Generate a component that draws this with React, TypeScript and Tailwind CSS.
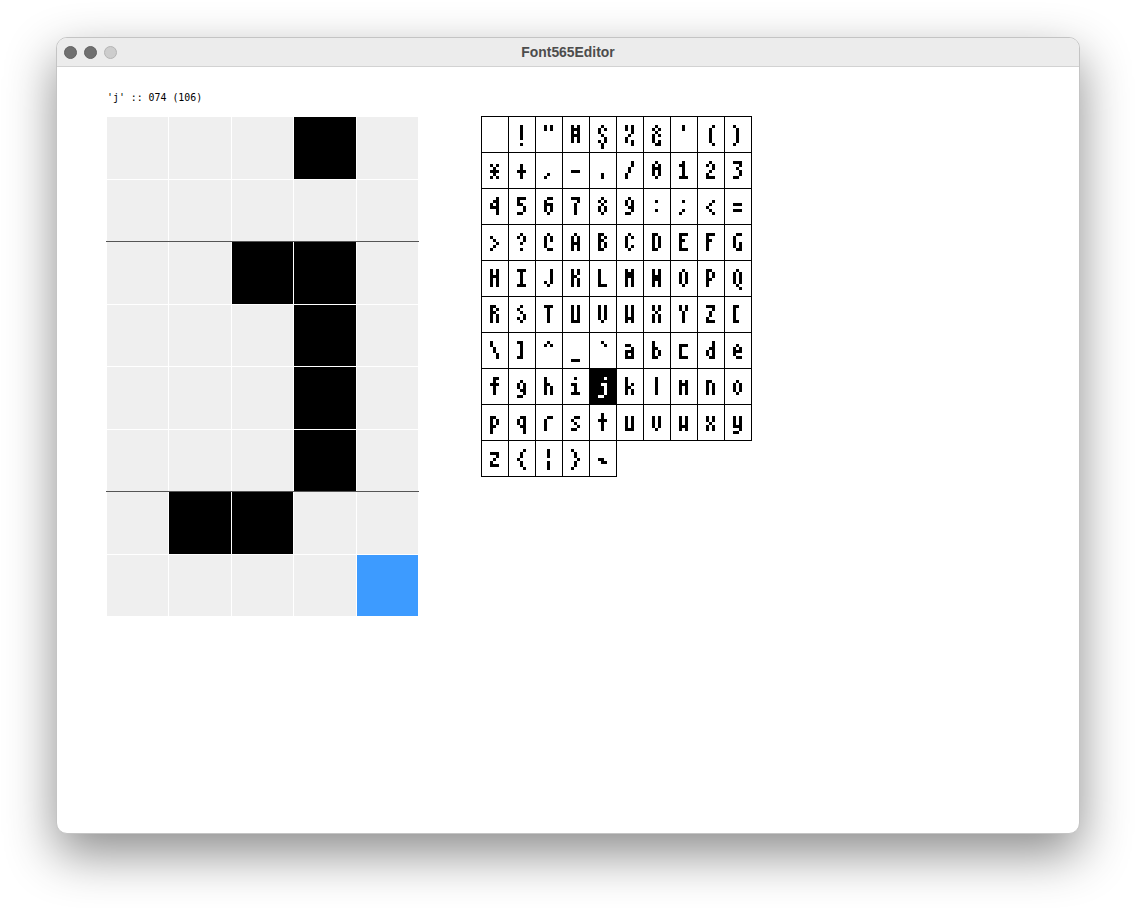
const GLYPHS: string[][] = [
  [],
  ["..#..", "..#..", "..#..", "..#..", "..#..", ".....", "..#.."],
  [".#.#.", ".#.#."],
  [".#.#.", ".###.", ".#.#.", ".###.", ".#.#.", ".#.#."],
  ["..#..", ".#.#.", ".#...", "..#..", "...#.", ".#.#.", "..#..", "..#.."],
  [".#.#.", ".#.#.", "...#.", "..#..", ".#...", ".#.#.", "...#."],
  ["..#..", ".#.#.", "..#..", ".#.#.", ".#...", ".#.#.", "..##."],
  ["..#..", "..#.."],
  ["...#.", "..#..", "..#..", "..#..", "..#..", "..#..", "...#."],
  [".#...", "..#..", "..#..", "..#..", "..#..", "..#..", ".#..."],
  [".....", ".#.#.", "..#..", ".###.", "..#..", ".#.#."],
  [".....", "..#..", "..#..", ".###.", "..#..", "..#.."],
  [".....", ".....", ".....", ".....", "..#..", ".#..."],
  [".....", ".....", ".....", ".###."],
  [".....", ".....", ".....", ".....", "..#..", "..#.."],
  ["...#.", "...#.", "..#..", "..#..", ".#...", ".#..."],
  ["..#..", ".#.#.", ".###.", ".#.#.", ".#.#.", "..#.."],
  ["..#..", ".##..", "..#..", "..#..", "..#..", ".###."],
  ["..#..", ".#.#.", "...#.", "..#..", ".#...", ".###."],
  [".###.", "...#.", "..#..", "...#.", "...#.", ".##.."],
  ["...#.", "..##.", ".#.#.", ".###.", "...#.", "...#."],
  [".###.", ".#...", ".##..", "...#.", "...#.", ".##.."],
  ["..##.", ".#...", ".###.", ".#.#.", ".#.#.", "..#.."],
  [".###.", "...#.", "..#..", "..#..", "..#..", "..#.."],
  ["..#..", ".#.#.", "..#..", ".#.#.", ".#.#.", "..#.."],
  ["..#..", ".#.#.", ".#.#.", "..##.", "...#.", ".##.."],
  [".....", "..#..", ".....", ".....", "..#.."],
  [".....", "..#..", ".....", ".....", "..#..", ".#..."],
  [".....", "...#.", "..#..", ".#...", "..#..", "...#."],
  [".....", ".....", ".###.", ".....", ".###."],
  [".....", ".#...", "..#..", "...#.", "..#..", ".#..."],
  ["..#..", ".#.#.", "...#.", "..#..", ".....", "..#.."],
  ["..#..", ".#.#.", ".#.#.", ".#...", ".#...", "..##."],
  ["..#..", ".#.#.", ".#.#.", ".###.", ".#.#.", ".#.#."],
  [".##..", ".#.#.", ".##..", ".#.#.", ".#.#.", ".##.."],
  ["..#..", ".#.#.", ".#...", ".#...", ".#.#.", "..#.."],
  [".##..", ".#.#.", ".#.#.", ".#.#.", ".#.#.", ".##.."],
  [".###.", ".#...", ".##..", ".#...", ".#...", ".###."],
  [".###.", ".#...", ".##..", ".#...", ".#...", ".#..."],
  ["..##.", ".#...", ".#...", ".#.#.", ".#.#.", "..##."],
  [".#.#.", ".#.#.", ".###.", ".#.#.", ".#.#.", ".#.#."],
  [".###.", "..#..", "..#..", "..#..", "..#..", ".###."],
  ["...#.", "...#.", "...#.", "...#.", ".#.#.", "..#.."],
  [".#.#.", ".#.#.", ".##..", ".#.#.", ".#.#.", ".#.#."],
  [".#...", ".#...", ".#...", ".#...", ".#...", ".###."],
  [".#.#.", ".###.", ".###.", ".#.#.", ".#.#.", ".#.#."],
  [".#.#.", ".#.#.", ".###.", ".###.", ".#.#.", ".#.#."],
  ["..#..", ".#.#.", ".#.#.", ".#.#.", ".#.#.", "..#.."],
  [".##..", ".#.#.", ".#.#.", ".##..", ".#...", ".#..."],
  ["..#..", ".#.#.", ".#.#.", ".#.#.", ".#.#.", "..#..", "...#."],
  [".##..", ".#.#.", ".##..", ".#.#.", ".#.#.", ".#.#."],
  ["..#..", ".#...", "..#..", "...#.", ".#.#.", "..#.."],
  [".###.", "..#..", "..#..", "..#..", "..#..", "..#.."],
  [".#.#.", ".#.#.", ".#.#.", ".#.#.", ".#.#.", ".###."],
  [".#.#.", ".#.#.", ".#.#.", ".#.#.", ".#.#.", "..#.."],
  [".#.#.", ".#.#.", ".#.#.", ".#.#.", ".###.", ".#.#."],
  [".#.#.", ".#.#.", "..#..", ".#.#.", ".#.#.", ".#.#."],
  [".#.#.", ".#.#.", "..#..", "..#..", "..#..", "..#.."],
  [".###.", "...#.", "..#..", "..#..", ".#...", ".###."],
  [".##..", ".#...", ".#...", ".#...", ".#...", ".##.."],
  [".#...", ".#...", "..#..", "..#..", "...#.", "...#."],
  [".##..", "..#..", "..#..", "..#..", "..#..", ".##.."],
  ["..#..", ".#.#."],
  [".....", ".....", ".....", ".....", ".....", ".....", ".###."],
  ["..#..", "...#."],
  [".....", ".##..", "...#.", ".###.", ".#.#.", ".###."],
  [".#...", ".#...", ".##..", ".#.#.", ".#.#.", ".##.."],
  [".....", ".###.", ".#...", ".#...", ".#...", ".###."],
  ["...#.", "...#.", "..##.", ".#.#.", ".#.#.", "..##."],
  [".....", "..#..", ".#.#.", ".###.", ".#...", "..##."],
  ["..##.", "..#..", ".###.", "..#..", "..#..", "..#.."],
  [".....", "..#..", ".#.#.", ".#.#.", "..##.", "...#.", ".##.."],
  [".#...", ".#...", ".##..", ".#.#.", ".#.#.", ".#.#."],
  ["..#..", ".....", ".##..", "..#..", "..#..", ".###."],
  ["...#.", ".....", "..##.", "...#.", "...#.", "...#.", ".##.."],
  [".#...", ".#...", ".#.#.", ".##..", ".#.#.", ".#.#."],
  ["..#..", "..#..", "..#..", "..#..", "..#..", "..#.."],
  [".....", ".#.#.", ".###.", ".#.#.", ".#.#.", ".#.#."],
  [".....", ".##..", ".#.#.", ".#.#.", ".#.#.", ".#.#."],
  [".....", "..#..", ".#.#.", ".#.#.", ".#.#.", "..#.."],
  [".....", ".##..", ".#.#.", ".#.#.", ".##..", ".#...", ".#..."],
  [".....", "..##.", ".#.#.", ".#.#.", "..##.", "...#.", "...#."],
  [".....", "..##.", ".#...", ".#...", ".#...", ".#..."],
  [".....", "..##.", ".#...", "..#..", "...#.", ".##.."],
  ["..#..", "..#..", ".###.", "..#..", "..#..", "..#.."],
  [".....", ".#.#.", ".#.#.", ".#.#.", ".#.#.", ".###."],
  [".....", ".#.#.", ".#.#.", ".#.#.", ".#.#.", "..#.."],
  [".....", ".#.#.", ".#.#.", ".#.#.", ".###.", ".#.#."],
  [".....", ".#.#.", ".#.#.", "..#..", ".#.#.", ".#.#."],
  [".....", ".#.#.", ".#.#.", ".#.#.", ".###.", "...#.", ".##.."],
  [".....", ".###.", "...#.", "..#..", ".#...", ".###."],
  ["...#.", "..#..", "..#..", ".#...", "..#..", "..#..", "...#."],
  ["..#..", "..#..", "..#..", ".....", "..#..", "..#..", "..#.."],
  [".#...", "..#..", "..#..", "...#.", "..#..", "..#..", ".#..."],
  [".....", ".....", ".....", ".##..", "..##."],
]

const SELECTED = 74
const CURSOR = { row: 7, col: 4 }
const ROWS = [0, 1, 2, 3, 4, 5, 6, 7]
const COLS = [0, 1, 2, 3, 4]

function isOn(glyph: string[], row: number, col: number) {
  return glyph[row]?.[col] === "#"
}

function Separator({ dark }: { dark: boolean }) {
  return <div className={dark ? "h-px -mx-px bg-[#555555]" : "h-px"} />
}

function PixelEditor({ glyph }: { glyph: string[] }) {
  return (
    <div className="w-[311px] flex flex-col">
      {ROWS.map((row) => (
        <div key={row}>
          {row > 0 && <Separator dark={row === 2 || row === 6} />}
          <div className="grid grid-cols-5 gap-px h-[61.5px]">
            {COLS.map((col) => {
              const isCursor = row === CURSOR.row && col === CURSOR.col
              return (
                <div
                  key={col}
                  className={
                    isCursor ? "bg-[#3d9bff]" : isOn(glyph, row, col) ? "bg-black" : "bg-[#efefef]"
                  }
                />
              )
            })}
          </div>
        </div>
      ))}
    </div>
  )
}

function GlyphTile({ index, selected }: { index: number; selected: boolean }) {
  const glyph = GLYPHS[index]
  return (
    <button
      type="button"
      aria-label={String.fromCharCode(index + 32)}
      className={
        selected
          ? "w-[28px] h-[37px] border border-black bg-black text-white pl-[5px] pt-[5px] block"
          : "w-[28px] h-[37px] border border-black bg-white text-black pl-[5px] pt-[5px] block"
      }
    >
      <div className="grid grid-cols-[repeat(5,3px)] auto-rows-[3px]">
        {ROWS.flatMap((row) =>
          COLS.map((col) => (
            <span key={`${row}-${col}`} className={isOn(glyph, row, col) ? "bg-current" : ""} />
          ))
        )}
      </div>
    </button>
  )
}

function GlyphTable() {
  return (
    <div className="grid grid-cols-[repeat(10,27px)] auto-rows-[36px] w-[271px] mt-[-1px]">
      {GLYPHS.map((_, i) => (
        <GlyphTile key={i} index={i} selected={i === SELECTED} />
      ))}
    </div>
  )
}

function TrafficLights() {
  return (
    <div className="flex items-center gap-[7px]">
      <div className="w-[13px] h-[13px] rounded-full bg-[#707070] border border-[#626262]" />
      <div className="w-[13px] h-[13px] rounded-full bg-[#707070] border border-[#626262]" />
      <div className="w-[13px] h-[13px] rounded-full bg-[#cdcdcd] border border-[#b4b4b4]" />
    </div>
  )
}

export default function App() {
  const glyph = GLYPHS[SELECTED]
  return (
    <div className="w-[1136px] h-[908px] bg-white pt-[37px] pl-[56px] overflow-hidden">
      <div className="w-[1024px] h-[797px] rounded-[11px] bg-white overflow-hidden border border-[#c4c4c4] shadow-[0_20px_50px_0_rgba(0,0,0,0.45)] flex flex-col">
        <div className="h-[29px] shrink-0 bg-[#ececec] border-b border-[#d2d2d2] flex items-center pl-[7px] relative">
          <TrafficLights />
          <div className="absolute inset-0 flex items-center justify-center text-[13.9px] font-bold text-[#4d4d4d] font-['Liberation_Sans',sans-serif]">
            Font565Editor
          </div>
        </div>
        <div className="pl-[50px] pt-[25px]">
          <p className="h-[12px] leading-[12px] mb-[13px] text-[9.9px] text-black font-['DejaVu_Sans_Mono',monospace] whitespace-pre">
            {"'j' :: 074 (106)"}
          </p>
          <div className="flex gap-[63px] items-start">
            <PixelEditor glyph={glyph} />
            <GlyphTable />
          </div>
        </div>
      </div>
    </div>
  )
}
